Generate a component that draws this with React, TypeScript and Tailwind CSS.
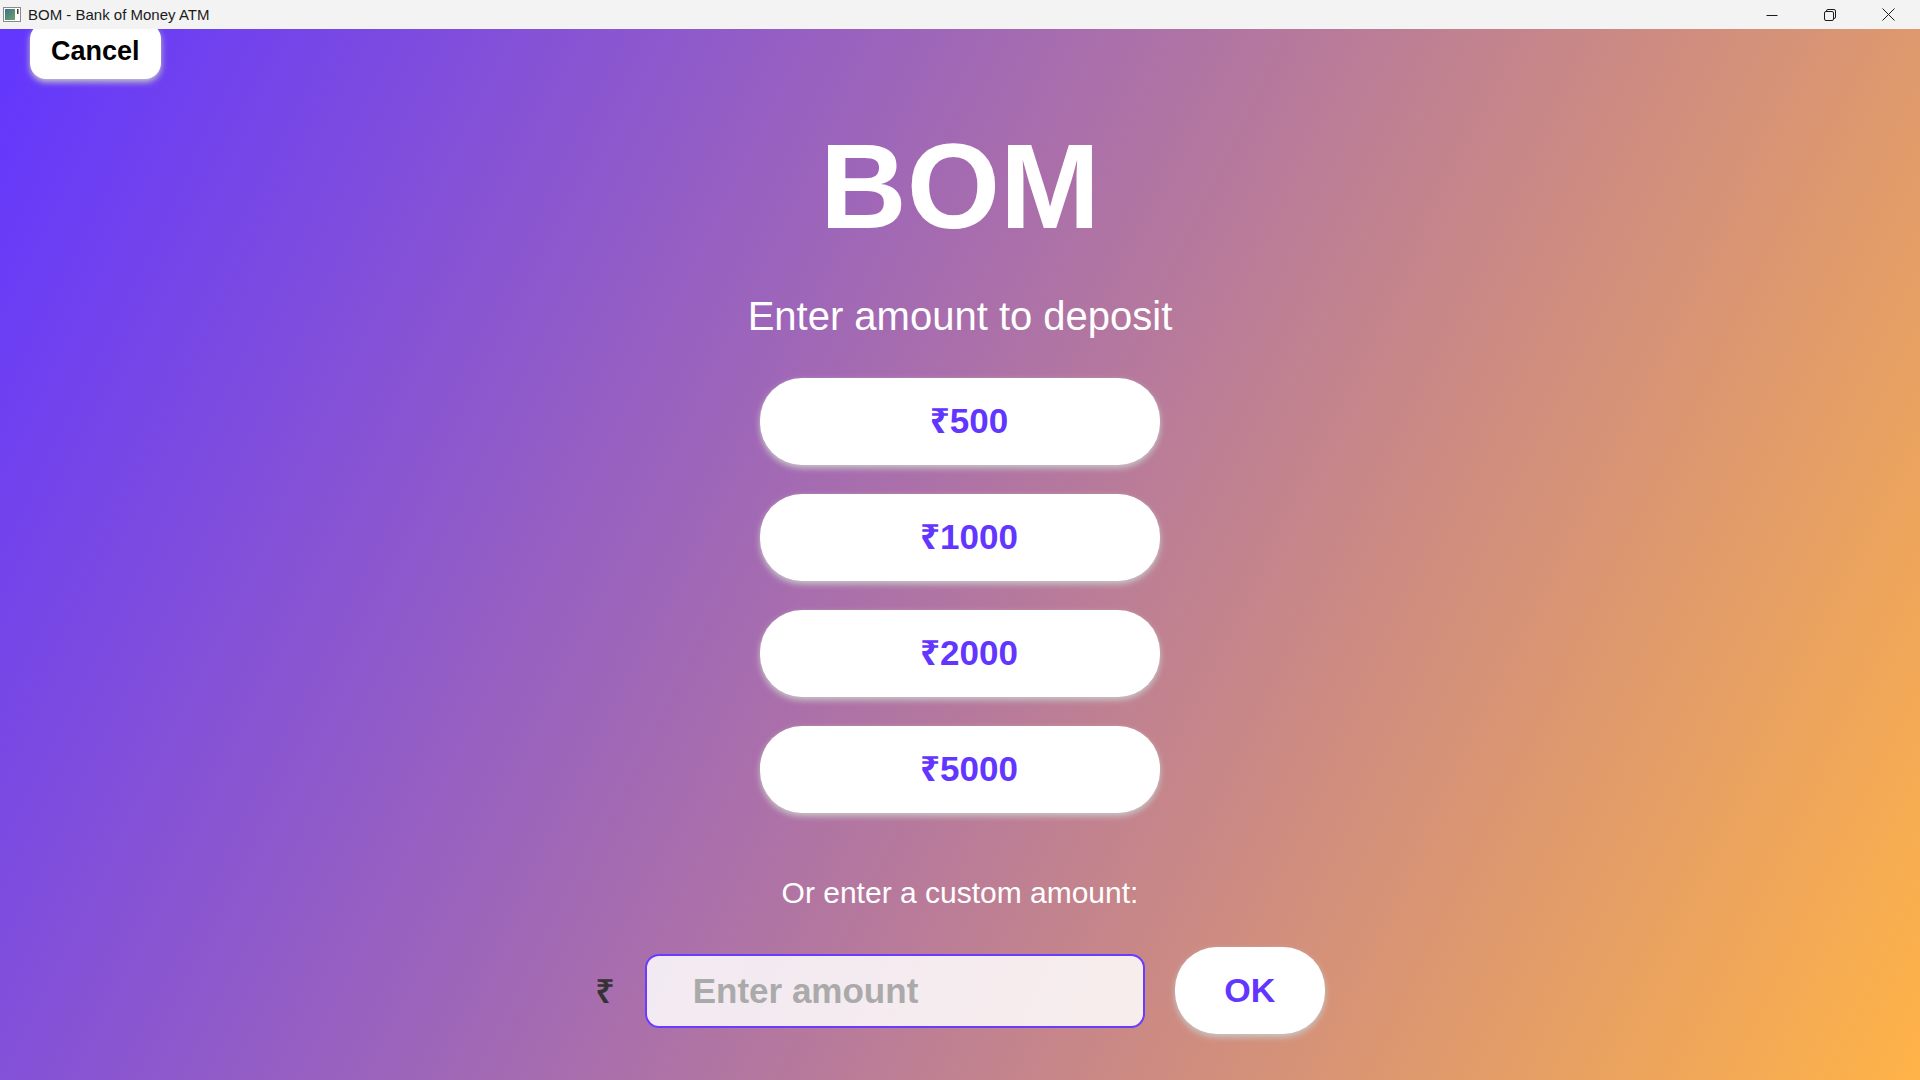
import React from 'react';

const amounts = [500, 1000, 2000, 5000];

const WindowIcon = () => (
  <svg width="18" height="15" viewBox="0 0 18 15">
    <defs>
      <linearGradient id="wi" x1="0" y1="0" x2="1" y2="1">
        <stop offset="0" stopColor="#3b6f8f" />
        <stop offset="1" stopColor="#6fa56a" />
      </linearGradient>
    </defs>
    <rect x="0.5" y="0.5" width="17" height="14" fill="#ffffff" stroke="#8a8a8a" />
    <rect x="2" y="2" width="10" height="11" fill="url(#wi)" />
    <rect x="14" y="2" width="1.5" height="5" fill="#3a3a3a" />
  </svg>
);

const TitleBar = () => (
  <div className="relative z-10 flex h-[29px] shrink-0 items-center bg-[#f3f3f3] text-[15px] text-[#1b1b1b]">
    <div className="ml-[3px] flex items-center">
      <WindowIcon />
    </div>
    <span className="ml-[7px] leading-none">BOM - Bank of Money ATM</span>
    <div className="ml-auto mr-[3px] flex h-full">
      <div className="flex w-[58px] items-center justify-center">
        <svg width="12" height="12" viewBox="0 0 12 12">
          <path d="M0.5 6.5h11" stroke="#1b1b1b" strokeWidth="1" />
        </svg>
      </div>
      <div className="flex w-[58px] items-center justify-center">
        <svg width="12" height="12" viewBox="0 0 12 12" fill="none" stroke="#1b1b1b" strokeWidth="1">
          <rect x="0.5" y="2.5" width="9" height="9" rx="1.5" />
          <path d="M2.5 2.5V2a1.5 1.5 0 0 1 1.5-1.5h6A1.5 1.5 0 0 1 11.5 2v6a1.5 1.5 0 0 1-1.5 1.5h-0.5" />
        </svg>
      </div>
      <div className="flex w-[58px] items-center justify-center">
        <svg width="13" height="13" viewBox="0 0 13 13">
          <path d="M0.5 0.5l12 12M12.5 0.5l-12 12" stroke="#1b1b1b" strokeWidth="1" />
        </svg>
      </div>
    </div>
  </div>
);

export default function App() {
  return (
    <div className="flex h-screen w-full flex-col overflow-hidden font-['Liberation_Sans','Noto_Sans',sans-serif]">
      <TitleBar />

      <div className="flex flex-1 flex-col bg-[linear-gradient(116deg,#6236ff,#ffb347)]">
        <div className="flex">
          <button className="-mt-[6px] ml-[30px] h-[56px] rounded-2xl bg-white px-[21px] text-[27px] font-bold text-black shadow-[0_3px_6px_#c8c8c8]">
            Cancel
          </button>
        </div>

        <div className="flex flex-col items-center">
          <h1 className="mt-[47px] text-[120px] font-bold leading-[120px] text-white">BOM</h1>
          <p className="mt-[50px] text-[40px] leading-[40px] text-white">Enter amount to deposit</p>

          <div className="mt-[42px] flex flex-col gap-[29px]">
            {amounts.map((amount) => (
              <button
                key={amount}
                className="h-[87px] w-[400px] rounded-[42px] bg-white pl-[18px] text-[35px] font-bold text-[#6236ff] shadow-[0_3px_6px_#c8c8c8]"
              >
                ₹{amount}
              </button>
            ))}
          </div>

          <p className="mt-[65px] text-[30px] leading-[30px] text-white">Or enter a custom amount:</p>

          <div className="mt-[39px] flex items-center gap-[30px]">
            <span className="text-[34px] font-semibold leading-none text-[#333333]">₹</span>
            <input
              type="text"
              placeholder="Enter amount"
              className="h-[74px] w-[500px] rounded-[14px] border-2 border-[#6a3cff] bg-white/85 pl-[46px] text-[35px] font-bold text-[#333333] outline-none placeholder:text-[#aaaaaa]"
            />
            <button className="h-[87px] w-[150px] rounded-[42px] bg-white text-[34px] font-bold text-[#6236ff] shadow-[0_3px_6px_#c8c8c8]">
              OK
            </button>
          </div>
        </div>
      </div>
    </div>
  );
}
